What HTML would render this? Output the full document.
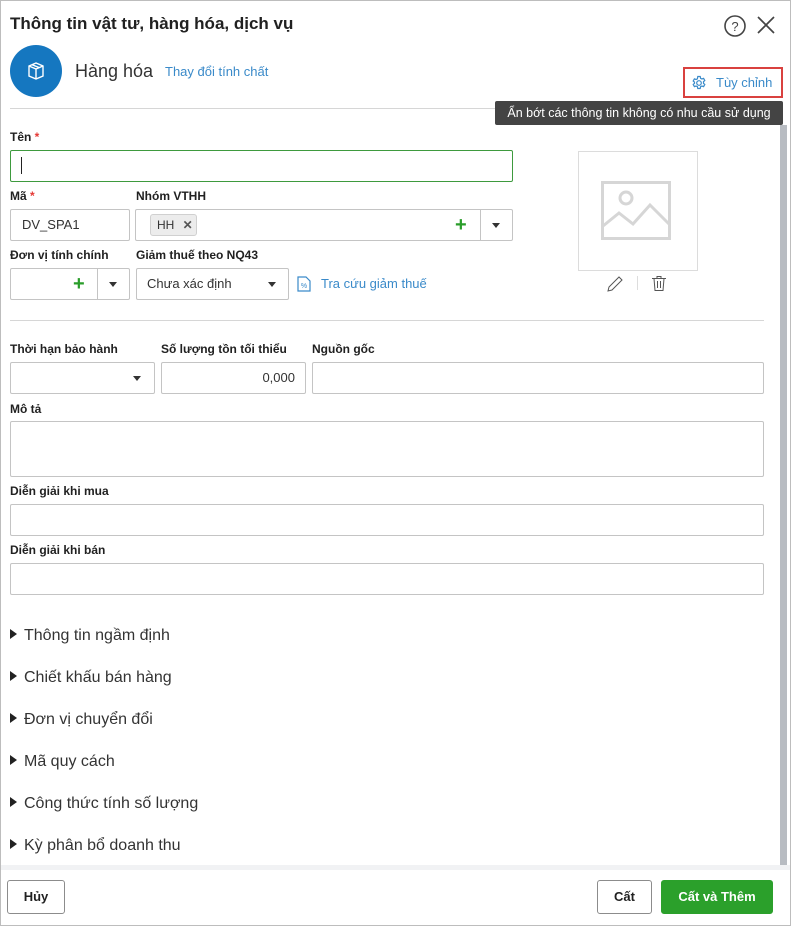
<!DOCTYPE html>
<html><head><meta charset="utf-8"><style>
*{box-sizing:border-box;margin:0;padding:0}
body{width:791px;height:926px;position:relative;background:#fff;font-family:"Liberation Sans",sans-serif;color:#212121;overflow:hidden}
.a{position:absolute}
.lbl{position:absolute;font-size:12px;font-weight:bold;color:#212121}
.in{position:absolute;border:1px solid #c4c4c4;border-radius:2px;background:#fff}
.st{color:#e53935}
.arr{position:absolute;width:0;height:0;border-left:4.5px solid transparent;border-right:4.5px solid transparent;border-top:5px solid #333}
.plus{position:absolute;color:#2a9d2a;font-size:20px;font-weight:bold;line-height:20px}
.sec{position:absolute;left:10px;font-size:16px;color:#333}
.sec:before{content:"";display:inline-block;width:0;height:0;border-top:5px solid transparent;border-bottom:5px solid transparent;border-left:7px solid #222;margin-right:7px;vertical-align:1px}
.btn{position:absolute;border:1px solid #8c8c8c;border-radius:3px;font-size:13px;font-weight:bold;text-align:center;line-height:32px;background:#fff}
</style></head><body>
<div class="a" style="left:0;top:0;width:791px;height:926px;border:1px solid #bdbdbd"></div>
<div class="a" style="left:10px;top:14px;font-size:17px;font-weight:bold">Thông tin vật tư, hàng hóa, dịch vụ</div>
<svg class="a" style="left:723px;top:14px" width="24" height="24" viewBox="0 0 24 24"><circle cx="12" cy="12" r="10" fill="none" stroke="#444" stroke-width="1.6"/><text x="12" y="17" font-size="13" text-anchor="middle" fill="#444" font-family="Liberation Sans">?</text></svg>
<svg class="a" style="left:756px;top:15px" width="20" height="20" viewBox="0 0 20 20"><path d="M2 2L18 18M18 2L2 18" stroke="#444" stroke-width="1.7"/></svg>
<div class="a" style="left:10px;top:45px;width:52px;height:52px;border-radius:50%;background:#1577c0"></div>
<svg class="a" style="left:25px;top:60px" width="22" height="22" viewBox="0 0 22 22" fill="none" stroke="#fff" stroke-width="1.4"><path d="M4 6L11 3L18 6V16L11 19L4 16Z"/><path d="M4 6L11 9L18 6M11 9V19M7 4.7L14 7.5"/></svg>
<div class="a" style="left:75px;top:61px;font-size:18px;color:#333">Hàng hóa</div>
<div class="a" style="left:165px;top:64px;font-size:13px;color:#3a8ac9">Thay đổi tính chất</div>
<div class="a" style="left:683px;top:67px;width:100px;height:31px;border:2px solid #d9413f"></div>
<svg class="a" style="left:691px;top:75px" width="16" height="16" viewBox="0 0 16 16" fill="none" stroke="#3a8ac9" stroke-width="1.2"><circle cx="8" cy="8" r="2.3"/><path d="M6.8 1.5h2.4l.4 1.8 1.3.7 1.7-.6 1.2 2.1-1.3 1.2v1.6l1.3 1.2-1.2 2.1-1.7-.6-1.3.7-.4 1.8H6.8l-.4-1.8-1.3-.7-1.7.6-1.2-2.1 1.3-1.2V7.2L2.2 6l1.2-2.1 1.7.6 1.3-.7z"/></svg>
<div class="a" style="left:716px;top:75px;font-size:13px;color:#3a8ac9">Tùy chỉnh</div>
<div class="a" style="left:10px;top:108px;width:755px;height:1px;background:#d6d6d6"></div>
<div class="a" style="left:495px;top:101px;width:288px;height:24px;background:#444;border-radius:2px;color:#fff;font-size:12.5px;line-height:24px;text-align:center">Ẩn bớt các thông tin không có nhu cầu sử dụng</div>
<div class="a" style="left:780px;top:125px;width:7px;height:740px;background:#b8bcc2"></div>

<div class="lbl" style="left:10px;top:130px">Tên <span class="st">*</span></div>
<div class="in" style="left:10px;top:150px;width:503px;height:32px;border-color:#3e9a3e"></div>
<div class="a" style="left:21px;top:157px;width:1px;height:17px;background:#222"></div>

<div class="lbl" style="left:10px;top:189px">Mã <span class="st">*</span></div>
<div class="in" style="left:10px;top:209px;width:120px;height:32px"></div>
<div class="a" style="left:22px;top:217px;font-size:13px;color:#333">DV_SPA1</div>
<div class="lbl" style="left:136px;top:189px">Nhóm VTHH</div>
<div class="in" style="left:135px;top:209px;width:378px;height:32px"></div>
<div class="a" style="left:150px;top:214px;width:47px;height:22px;background:#ececec;border:1px solid #d0d0d0;border-radius:3px;font-size:12px;line-height:20px;padding-left:6px;color:#333">HH <b style="margin-left:5px;color:#555">✕</b></div>
<div class="plus" style="left:455px;top:215px">+</div>
<div class="a" style="left:480px;top:210px;width:1px;height:30px;background:#c4c4c4"></div>
<div class="arr" style="left:492px;top:223px"></div>

<div class="lbl" style="left:10px;top:248px">Đơn vị tính chính</div>
<div class="in" style="left:10px;top:268px;width:120px;height:32px"></div>
<div class="plus" style="left:73px;top:274px">+</div>
<div class="a" style="left:97px;top:269px;width:1px;height:30px;background:#c4c4c4"></div>
<div class="arr" style="left:109px;top:282px"></div>
<div class="lbl" style="left:136px;top:248px">Giảm thuế theo NQ43</div>
<div class="in" style="left:136px;top:268px;width:153px;height:32px"></div>
<div class="a" style="left:147px;top:276px;font-size:13px;color:#333">Chưa xác định</div>
<div class="arr" style="left:268px;top:282px"></div>
<svg class="a" style="left:297px;top:276px" width="14" height="16" viewBox="0 0 14 16" fill="none" stroke="#3a8ac9" stroke-width="1.2"><path d="M1 1h8l4 4v10H1z"/><text x="7" y="12" font-size="7" fill="#3a8ac9" stroke="none" text-anchor="middle" font-family="Liberation Sans">%</text></svg>
<div class="a" style="left:321px;top:276px;font-size:13px;color:#3a8ac9">Tra cứu giảm thuế</div>

<div class="a" style="left:578px;top:151px;width:120px;height:120px;border:1px solid #dcdcdc"></div>
<svg class="a" style="left:601px;top:181px" width="70" height="59" viewBox="0 0 70 59" fill="none" stroke="#d6d6d6" stroke-width="3"><rect x="1.5" y="1.5" width="67" height="56"/><circle cx="25" cy="17" r="6"/><path d="M2 45L18 32L32 43L49 24L68 43"/></svg>
<svg class="a" style="left:606px;top:275px" width="18" height="18" viewBox="0 0 18 18" fill="none" stroke="#555" stroke-width="1"><path d="M2 16L3 12L13 2L16 5L6 15Z"/></svg>
<div class="a" style="left:637px;top:276px;width:1px;height:14px;background:#ddd"></div>
<svg class="a" style="left:651px;top:275px" width="16" height="17" viewBox="0 0 16 17" fill="none" stroke="#555" stroke-width="1"><path d="M1 3.5h14M6 3.5V1.5h4v2M3 3.5l1 12h8l1-12M6.5 6v7M9.5 6v7"/></svg>

<div class="a" style="left:10px;top:320px;width:754px;height:1px;background:#d6d6d6"></div>
<div class="lbl" style="left:10px;top:342px">Thời hạn bảo hành</div>
<div class="lbl" style="left:161px;top:342px">Số lượng tồn tối thiểu</div>
<div class="lbl" style="left:312px;top:342px">Nguồn gốc</div>
<div class="in" style="left:10px;top:362px;width:145px;height:32px"></div>
<div class="arr" style="left:133px;top:376px"></div>
<div class="in" style="left:161px;top:362px;width:145px;height:32px"></div>
<div class="a" style="left:161px;top:370px;width:134px;text-align:right;font-size:13px;color:#333">0,000</div>
<div class="in" style="left:312px;top:362px;width:452px;height:32px"></div>
<div class="lbl" style="left:10px;top:402px">Mô tả</div>
<div class="in" style="left:10px;top:421px;width:754px;height:56px"></div>
<div class="lbl" style="left:10px;top:484px">Diễn giải khi mua</div>
<div class="in" style="left:10px;top:504px;width:754px;height:32px"></div>
<div class="lbl" style="left:10px;top:543px">Diễn giải khi bán</div>
<div class="in" style="left:10px;top:563px;width:754px;height:32px"></div>

<div class="sec" style="top:627px">Thông tin ngầm định</div>
<div class="sec" style="top:669px">Chiết khấu bán hàng</div>
<div class="sec" style="top:711px">Đơn vị chuyển đổi</div>
<div class="sec" style="top:753px">Mã quy cách</div>
<div class="sec" style="top:795px">Công thức tính số lượng</div>
<div class="sec" style="top:837px">Kỳ phân bổ doanh thu</div>

<div class="a" style="left:1px;top:865px;width:789px;height:5px;background:#f1f2f4"></div>
<div class="btn" style="left:7px;top:880px;width:58px;height:34px">Hủy</div>
<div class="btn" style="left:597px;top:880px;width:55px;height:34px">Cất</div>
<div class="btn" style="left:661px;top:880px;width:112px;height:34px;background:#2ba02b;border-color:#2ba02b;color:#fff">Cất và Thêm</div>
</body></html>
